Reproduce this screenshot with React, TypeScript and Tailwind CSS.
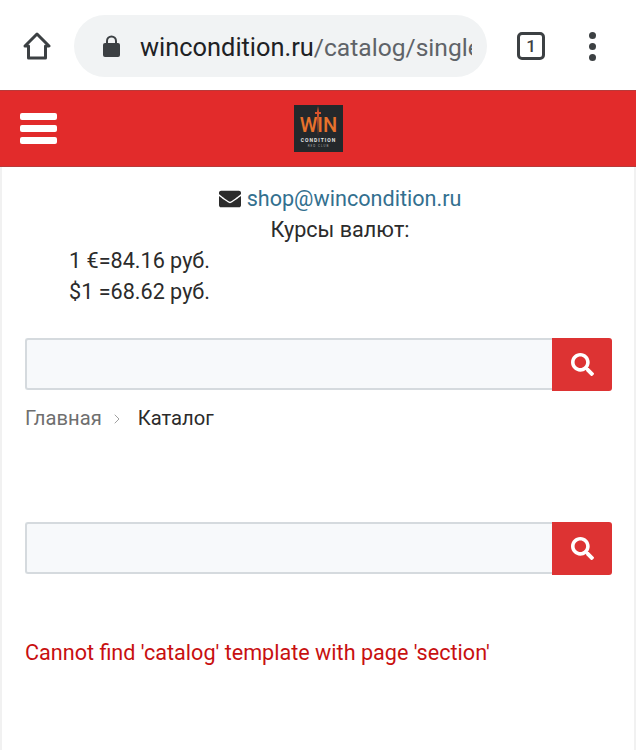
import React from 'react';
import { ChevronRight } from 'lucide-react';
import { FaEnvelope, FaSearch } from 'react-icons/fa';

const SearchBar: React.FC = () => (
  <div className="flex h-[53px] w-[587px]">
    <div className="flex-1 h-[52px] bg-[#f7f9fb] border-2 border-r-0 border-[#d5dade] rounded-l-[3px]"></div>
    <button className="w-[60px] h-[53px] bg-[#dd3333] rounded-r-[3px] flex items-center justify-center">
      <FaSearch className="w-[23px] h-[23px] text-white" />
    </button>
  </div>
);

const App: React.FC = () => {
  return (
    <div className="w-[636px] h-[750px] overflow-hidden bg-white font-['Roboto',sans-serif] text-[21.6px] leading-[30.6px] text-[#2b2b2b]">
      {/* Browser bar */}
      <div className="h-[90px] pt-[2px] flex items-center pl-[23px]">
        <svg width="28" height="28" viewBox="0 0 28 28" fill="none" stroke="#3c4043" strokeWidth="3" strokeLinejoin="round">
          <path d="M14 2 L26 14 L22.5 14 L22.5 26 L5.5 26 L5.5 14 L2 14 Z" />
        </svg>
        <div className="ml-[23px] w-[413px] h-[62px] rounded-full bg-[#f1f3f4] flex items-center pl-[29px] pr-[15px]">
          <svg width="17" height="22" viewBox="0 0 17 22" className="shrink-0">
            <path d="M4 8 V6 a4.5 4.5 0 0 1 9 0 V8" fill="none" stroke="#3c4043" strokeWidth="2" />
            <rect x="0" y="8" width="17" height="14" rx="2" fill="#3c4043" />
          </svg>
          <div className="ml-[20px] pt-[2px] overflow-hidden whitespace-nowrap text-[24.6px] leading-[32px] text-[#5f6368]">
            <span className="text-[25.4px] text-[#202124]">wincondition.ru</span>/catalog/single
          </div>
        </div>
        <div className="ml-[30px] w-[28px] h-[28px] rounded-[5px] border-[3px] border-[#3c4043] flex items-center justify-center text-[17px] leading-none font-medium text-[#3c4043]">
          1
        </div>
        <div className="ml-[44px] flex flex-col gap-[4px]">
          <div className="w-[7px] h-[7px] rounded-full bg-[#3c4043]"></div>
          <div className="w-[7px] h-[7px] rounded-full bg-[#3c4043]"></div>
          <div className="w-[7px] h-[7px] rounded-full bg-[#3c4043]"></div>
        </div>
      </div>

      {/* Site header */}
      <div className="h-[77px] bg-[#e22b2b] border-t border-b border-[#b93a3a] flex items-center pl-[20px]">
        <div className="w-[37px] flex flex-col gap-[5px]">
          <div className="h-[7px] rounded-[2px] bg-white"></div>
          <div className="h-[7px] rounded-[2px] bg-white"></div>
          <div className="h-[7px] rounded-[2px] bg-white"></div>
        </div>
        <div className="ml-[237px] w-[49px] h-[47px] bg-[#24282b] flex flex-col items-center relative overflow-hidden">
          <svg width="6" height="30" viewBox="0 0 6 30" className="absolute top-[1px] left-[21px]">
            <path d="M3 0 L4 6 L6 6 L6 8 L4 8 L3 30 L2 8 L0 8 L0 6 L2 6 Z" fill="#d9532c" />
          </svg>
          <div className="mt-[11px] h-[18px] text-[20px] leading-[18px] font-medium text-[#e8722c]">WIN</div>
          <div className="mt-[3px] text-[5px] leading-[7px] font-bold tracking-[1px] text-[#e5e5e5]">CONDITION</div>
          <div className="text-[3px] leading-[4px] tracking-[1px] text-[#aaaaaa]">RED CLUB</div>
        </div>
      </div>

      {/* Content */}
      <div className="h-[583px] border-l-2 border-r-2 border-[#f1f1f1] pl-[23px]">
        <div className="pt-[17px] pl-[21px] flex flex-col items-center">
          <div className="flex items-center gap-[6px]">
            <FaEnvelope className="w-[22px] h-[22px] text-[#2b2b2b]" />
            <a className="text-[#33708f]">shop@wincondition.ru</a>
          </div>
          <div>Курсы валют:</div>
        </div>
        <div className="w-[185px] mt-[1px] text-right">
          <div>1 €=84.16 руб.</div>
          <div>$1 =68.62 руб.</div>
        </div>

        <div className="mt-[31px]">
          <SearchBar />
        </div>

        <div className="mt-[12px] flex items-center">
          <span className="text-[#6f6f6f] text-[20.2px]">Главная</span>
          <ChevronRight className="w-[16px] h-[16px] ml-[7px] text-[#a0a0a0]" strokeWidth={1.5} />
          <span className="ml-[13px] text-[20.2px]">Каталог</span>
        </div>

        <div className="mt-[88px]">
          <SearchBar />
        </div>

        <div className="mt-[63px] text-[#c81010]">Cannot find 'catalog' template with page 'section'</div>
      </div>
    </div>
  );
};

export default App;
